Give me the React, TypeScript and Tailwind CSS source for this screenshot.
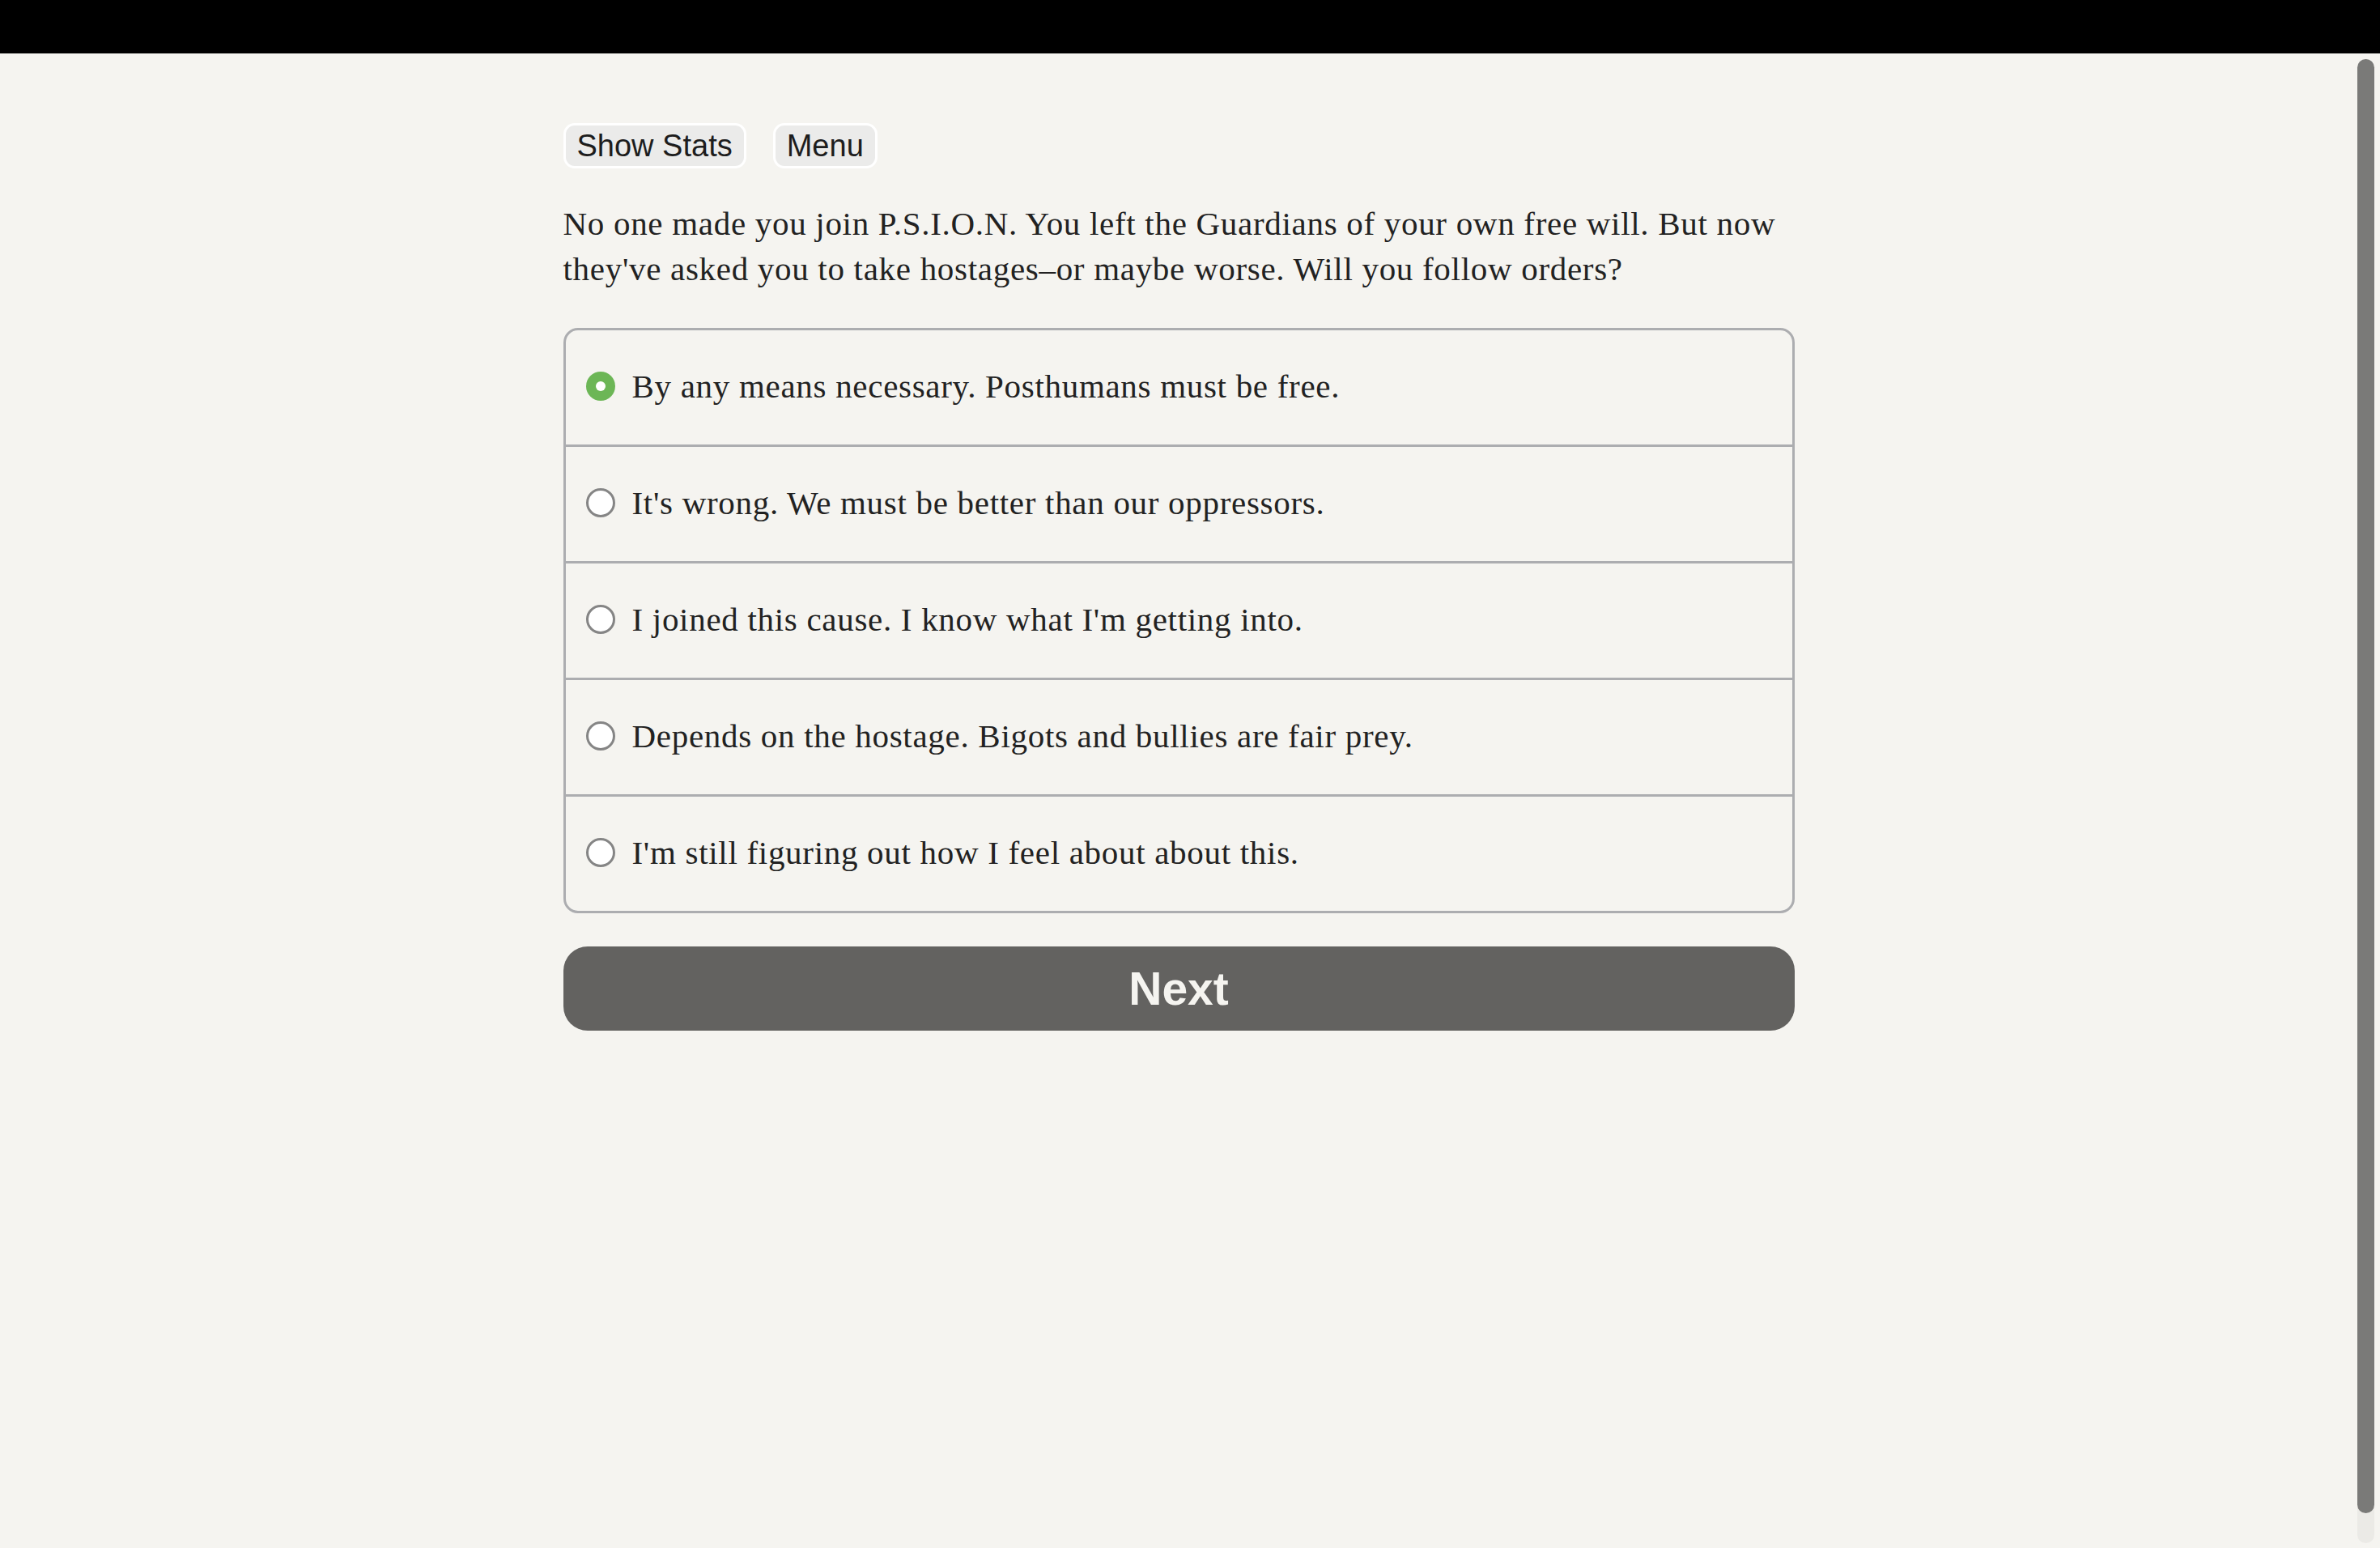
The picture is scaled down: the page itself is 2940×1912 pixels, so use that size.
import React from "react";

const options = [
  "By any means necessary. Posthumans must be free.",
  "It's wrong. We must be better than our oppressors.",
  "I joined this cause. I know what I'm getting into.",
  "Depends on the hostage. Bigots and bullies are fair prey.",
  "I'm still figuring out how I feel about about this.",
];

export default function App() {
  return (
    <div className="flex h-[1912px] w-[2940px] flex-col overflow-hidden bg-[#f5f4f0]">
      <div className="h-[66px] w-full shrink-0 bg-black" />
      <div className="flex min-h-0 flex-1 flex-row">
        <main className="flex flex-1 justify-center">
          <div className="ml-[2px] flex w-[1521px] flex-col pt-[86px]">
            <div className="flex flex-row gap-[33px]">
              <button className="flex h-[56px] items-center rounded-[14px] border-[3px] border-white bg-[#ebebea] px-[14px] font-['Liberation_Sans',Arial,sans-serif] text-[38px] leading-none text-[#1d1d1d]">
                Show Stats
              </button>
              <button className="flex h-[56px] items-center rounded-[14px] border-[3px] border-white bg-[#ebebea] px-[14px] font-['Liberation_Sans',Arial,sans-serif] text-[38px] leading-none text-[#1d1d1d]">
                Menu
              </button>
            </div>
            <p className="mt-[40px] font-['Liberation_Serif','Times_New_Roman',serif] text-[41px] leading-[56px] tracking-[0.7px] text-[#222222]">
              No one made you join P.S.I.O.N. You left the Guardians of your own free will. But now they've asked you to take hostages–or maybe worse. Will you follow orders?
            </p>
            <div className="mt-[45px] flex flex-col overflow-hidden rounded-[18px] border-[3px] border-[#acadb0]">
              {options.map((opt, i) => (
                <div
                  key={i}
                  className={
                    i === 0
                      ? "flex h-[141px] items-center gap-[21px] pb-[4px] pl-[25px]"
                      : "flex h-[144px] items-center gap-[21px] border-t-[3px] border-[#acadb0] pb-[4px] pl-[25px]"
                  }
                >
                  {i === 0 ? (
                    <div className="flex h-[36px] w-[36px] shrink-0 items-center justify-center rounded-full bg-[#6cb656]">
                      <div className="h-[12px] w-[12px] rounded-full bg-white" />
                    </div>
                  ) : (
                    <div className="h-[36px] w-[36px] shrink-0 rounded-full border-[3.5px] border-[#858585] bg-white" />
                  )}
                  <span className="font-['Liberation_Serif','Times_New_Roman',serif] text-[41px] leading-[56px] tracking-[0.7px] text-[#222222]">
                    {opt}
                  </span>
                </div>
              ))}
            </div>
            <button className="mt-[41px] flex h-[104px] w-full items-center justify-center rounded-[30px] bg-[#636260] font-['Liberation_Sans',Arial,sans-serif] text-[57px] font-bold leading-none text-[#f5f4f0]">
              Next
            </button>
          </div>
        </main>
        <div className="flex w-[30px] shrink-0 flex-col pb-[6px] pl-[2px] pr-[7px] pt-[7px]">
          <div className="flex flex-1 flex-col rounded-full bg-[#ebeae6]">
            <div className="h-[1796px] w-full rounded-full bg-[#7a7a78]" />
          </div>
        </div>
      </div>
    </div>
  );
}
